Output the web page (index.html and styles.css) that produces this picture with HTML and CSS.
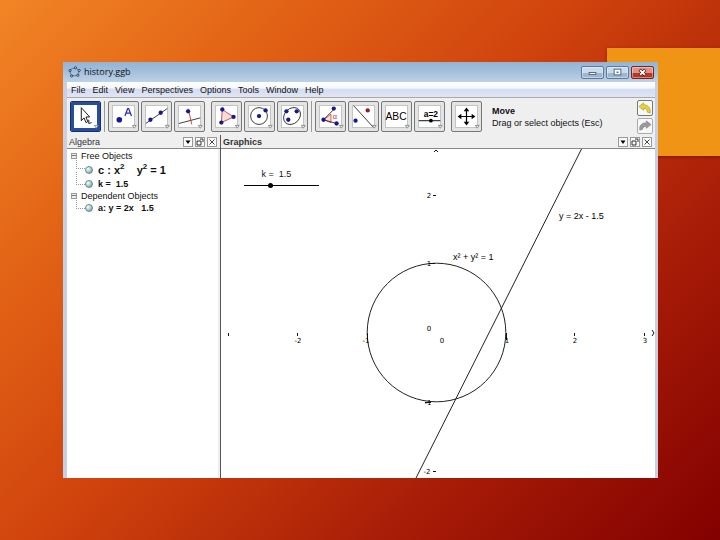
FILE: index.html
```
<!DOCTYPE html>
<html lang="en">
<head>
<meta charset="utf-8">
<title>history.ggb</title>
<link rel="stylesheet" href="styles.css">
</head>
<body>
<div class="accent"></div>
<main class="window">
  <header class="titlebar">
    <svg class="logo" viewBox="0 0 13 12" aria-hidden="true"><ellipse cx="6.5" cy="6" rx="4.3" ry="3.8" fill="none" stroke="#5b7194"/><g fill="#b9cbe6" stroke="#27395e" stroke-width=".9"><circle cx="7.5" cy="1.8" r="1.1"/><circle cx="11.2" cy="4.4" r="1.1"/><circle cx="9.8" cy="9.3" r="1.1"/><circle cx="3.6" cy="9.9" r="1.1"/><circle cx="2" cy="4.5" r="1.1"/></g></svg>
    <h1 class="title">history.ggb</h1>
    <div class="controls">
      <button class="control" aria-label="Minimize"><svg viewBox="0 0 22 11"><rect x="7.5" y="5.5" width="7" height="2" fill="#fff" stroke="#53657e"/></svg></button>
      <button class="control" aria-label="Maximize"><svg viewBox="0 0 22 11"><rect x="7.5" y="2" width="7" height="6" fill="#fff" stroke="#53657e"/><rect x="10" y="4.500" width="2" height="1.500" fill="#53657e"/></svg></button>
      <button class="control close" aria-label="Close"><svg viewBox="0 0 22 11"><path d="M8 2.500l6 6M14 2.500l-6 6" stroke="#5c2525" stroke-width="3.400"/><path d="M8.500 3l5 5M13.500 3l-5 5" stroke="#fff" stroke-width="1.800"/></svg></button>
    </div>
  </header>
  <nav class="menu">
    <button>File</button><button>Edit</button><button>View</button><button>Perspectives</button><button>Options</button><button>Tools</button><button>Window</button><button>Help</button>
  </nav>
  <section class="toolbar">
    <div class="group">
      <button class="tool selected" aria-label="Move"><svg viewBox="0 0 31 31"><path d="M11 6v14l3-3 2 5 2-1-2-5h4z" fill="#fff" stroke="#111"/><path d="M19 19v4l3-1" fill="none" stroke="#111"/><path class="more" d="M25 25h4l-2 3z"/></svg></button>
    </div>
    <div class="group ruled">
      <button class="tool" aria-label="New Point"><svg viewBox="0 0 31 31"><circle class="pt" cx="11" cy="19" r="3"/><path d="M17 15l3-8h1l3 8M18 12h5" fill="none" stroke="#2424c4" stroke-width="1.300"/><path class="more" d="M25 25h4l-2 3z"/></svg></button>
      <button class="tool" aria-label="Line"><svg viewBox="0 0 31 31"><path d="M4 23L27 7" stroke="#333"/><circle class="pt" cx="9" cy="19" r="2.300"/><circle class="pt" cx="20" cy="11.500" r="2.300"/><path class="more" d="M25 25h4l-2 3z"/></svg></button>
      <button class="tool" aria-label="Perpendicular Line"><svg viewBox="0 0 31 31"><path d="M4 23l23-6" stroke="#333"/><path d="M14 7l4 17" stroke="#d33a30"/><circle class="pt" cx="14" cy="10" r="2.300"/><path class="more" d="M25 25h4l-2 3z"/></svg></button>
    </div>
    <div class="group">
      <button class="tool" aria-label="Polygon"><svg viewBox="0 0 31 31"><path d="M11 8l12 8-13 6z" fill="#f8dcda" stroke="#bd4b48"/><circle class="pt" cx="11" cy="8" r="2.300"/><circle class="pt" cx="23" cy="16" r="2.300"/><circle class="pt" cx="10" cy="22" r="2.300"/><path class="more" d="M25 25h4l-2 3z"/></svg></button>
      <button class="tool" aria-label="Circle"><svg viewBox="0 0 31 31"><circle cx="15" cy="15" r="9" fill="none" stroke="#333"/><circle class="pt" cx="15" cy="15" r="2.300"/><circle class="pt" cx="22" cy="9" r="2.300"/><path class="more" d="M25 25h4l-2 3z"/></svg></button>
      <button class="tool" aria-label="Conic"><svg viewBox="0 0 31 31"><ellipse cx="15" cy="15" rx="10" ry="8" fill="none" stroke="#333" transform="rotate(-45 15 15)"/><circle class="pt" cx="9" cy="10" r="2.300"/><circle class="pt" cx="20" cy="10" r="2.300"/><circle class="pt" cx="11" cy="19" r="2.300"/><path class="more" d="M25 25h4l-2 3z"/></svg></button>
    </div>
    <div class="group ruled">
      <button class="tool" aria-label="Angle"><svg viewBox="0 0 31 31"><path d="M8 19l8-6v9z" fill="#f8dcda" stroke="#cf5550"/><path d="M19 8L8 19l14 4" fill="none" stroke="#333"/><circle class="pt" cx="19" cy="7" r="2.300"/><circle class="pt" cx="8" cy="19" r="2.300"/><circle class="pt" cx="22" cy="23" r="2.300"/><text x="18" y="18" font-size="8" fill="#cc3833">α</text><path class="more" d="M25 25h4l-2 3z"/></svg></button>
      <button class="tool" aria-label="Reflect"><svg viewBox="0 0 31 31"><path d="M5 4l21 23" stroke="#333"/><circle class="pt" cx="7" cy="20" r="2.300"/><circle cx="20" cy="9" r="2.300" fill="#8e2026"/><path class="more" d="M25 25h4l-2 3z"/></svg></button>
      <button class="tool" aria-label="Insert Text"><svg viewBox="0 0 31 31"><text x="15" y="19" font-size="11" text-anchor="middle">ABC</text><path class="more" d="M25 25h4l-2 3z"/></svg></button>
      <button class="tool" aria-label="Slider"><svg viewBox="0 0 31 31"><text x="17" y="16" font-size="9" font-weight="bold" text-anchor="middle">a=2</text><path d="M4 20h23" stroke="#000"/><circle cx="17" cy="20" r="2"/><path class="more" d="M25 25h4l-2 3z"/></svg></button>
    </div>
    <div class="group">
      <button class="tool" aria-label="Move Graphics View"><svg viewBox="0 0 31 31"><path d="M8 15.500h15M15.500 8v15" stroke="#000" stroke-width="1.300"/><path d="M15.500 6l3 4h-6zM15.500 25l3-4h-6zM6 15.500l4-3v6zM25 15.500l-4-3v6z"/><path class="more" d="M25 25h4l-2 3z"/></svg></button>
    </div>
    <div class="help"><strong>Move</strong><span>Drag or select objects (Esc)</span></div>
    <div class="history">
      <button aria-label="Undo"><svg viewBox="0 0 15 15"><path d="M1 6l5-4v2c5 0 8 4 7 9l-3-1c0-3-1-4-4-4v2z" fill="#e8d22c" stroke="#a79835" stroke-width=".7"/></svg></button>
      <button aria-label="Redo" disabled><svg viewBox="0 0 15 15"><path d="M14 6L9 2v2C4 4 1 7 2 12l3-1c0-2 1-3 4-3v2z" fill="#999" stroke="#888" stroke-width=".7"/></svg></button>
    </div>
  </section>
  <div class="panes">
    <section class="pane algebra">
      <header class="panehead"><h2>Algebra</h2>
        <button aria-label="Algebra menu"><svg viewBox="0 0 8 8"><path d="M1.500 2.500h5L4 6z"/></svg></button><button aria-label="Detach Algebra"><svg viewBox="0 0 8 8"><path d="M1 3h4v4H1zM4 1h3v3" fill="none" stroke="#333"/></svg></button><button aria-label="Close Algebra"><svg viewBox="0 0 8 8"><path d="M1.500 1.500l5 5M6.500 1.500l-5 5" stroke="#444"/></svg></button>
      </header>
      <ul class="tree">
        <li><div class="branch"><span class="toggle"></span>Free Objects</div>
          <ul class="leaves"><li class="formula"><i class="ball"></i><span>c : x<sup>2</sup>    y<sup>2</sup> = 1</span></li><li><i class="ball"></i><span>k =  1.5</span></li></ul></li>
        <li><div class="branch"><span class="toggle"></span>Dependent Objects</div>
          <ul class="leaves"><li><i class="ball"></i><span>a: y = 2x   1.5</span></li></ul></li>
      </ul>
    </section>
    <section class="pane graphics">
      <header class="panehead"><h2><b>Graphics</b></h2>
        <button aria-label="Graphics menu"><svg viewBox="0 0 8 8"><path d="M1.500 2.500h5L4 6z"/></svg></button><button aria-label="Detach Graphics"><svg viewBox="0 0 8 8"><path d="M1 3h4v4H1zM4 1h3v3" fill="none" stroke="#333"/></svg></button><button aria-label="Close Graphics"><svg viewBox="0 0 8 8"><path d="M1.500 1.500l5 5M6.500 1.500l-5 5" stroke="#444"/></svg></button>
      </header>
      <div class="canvas">
        <svg class="plot" viewBox="0 0 434 329" role="img" aria-label="Unit circle and a straight line">
          <g fill="none" stroke="#222"><circle cx="215.500" cy="183.500" r="69.300"/><path d="M360.500 0L195 329"/></g>
          <path d="M7.500 184v3M76.500 184v3M146.500 184v7M285.500 184v7M353.500 184v3M423.500 184v3M212 46.500h3M208 114.500h6M204 253.500h6M212 322.500h3M213 3l2-2 2 2M431 181l2 3-2 3" fill="none" stroke="#111"/>
          <g class="ticks"><text x="77" y="194">-2</text><text x="145" y="194">-1</text><text x="221" y="194">0</text><text x="286" y="194">1</text><text x="354" y="194">2</text><text x="424" y="194">3</text><text x="208" y="49">2</text><text x="208" y="117">1</text><text x="208" y="182">0</text><text x="207" y="256">-1</text><text x="206" y="325">-2</text></g>
          <g class="names"><text x="232" y="111">x² + y² = 1</text><text x="338" y="70">y = 2x - 1.5</text></g>
        </svg>
        <div class="slider"><label for="k">k =  1.5</label><input id="k" type="range" min="-5" max="5" step=".1" value="-1.6"></div>
      </div>
    </section>
  </div>
</main>
</body>
</html>
```
FILE: styles.css
```
* { box-sizing: border-box; }
body {
  margin: 0; min-height: 100vh; padding: 62px 62px 62px 63px;
  display: flex; flex-direction: column;
  background: linear-gradient(135deg, #f28526 0%, #e26416 22%, #d0430d 46%, #a81d07 73%, #820000 100%);
  font: 9px/12px "Liberation Sans", Arial, sans-serif; color: #111;
}
button { font: inherit; color: inherit; margin: 0; padding: 0; border: 0; background: none; }
svg { display: block; }
h1, h2, ul { margin: 0; padding: 0; font: inherit; list-style: none; }
.accent { position: absolute; top: 48px; right: 0; width: 113px; height: 108px; background: #f09415; box-shadow: 0 1px 3px #5008; }
.window { position: relative; flex: 1; display: flex; flex-direction: column; padding: 0 3px 0 4px; background: #c5d0e2; }
.titlebar { display: flex; align-items: center; height: 20px; margin: 0 -3px 0 -4px; padding: 0 4px 0 5px; background: linear-gradient(#94b3d3, #a1bddb 40%, #bdd1e8); }
.logo { width: 13px; height: 12px; margin-right: 3px; }
.title { flex: 1; font: 9px/12px "Open Sans", sans-serif; }
.controls { display: flex; gap: 2px; }
.control { width: 23px; height: 13px; border: 1px solid #5d7898; border-radius: 2px; background: linear-gradient(#c9daec 50%, #9db7d3 50%); box-shadow: inset 0 0 0 1px #fff6; }
.control svg { width: 100%; height: 11px; }
.close { border-color: #712722; background: linear-gradient(#dc9287 50%, #b93723 50%); }
.menu { display: flex; gap: 7px; height: 16px; padding: 0 4px; background: linear-gradient(#fff, #f3f6fc 40%, #d6ddf0 50%, #dfe5f5); border-bottom: 1px solid #aaa; }
.toolbar { display: flex; gap: 6px; align-items: center; height: 37px; padding: 0 2px 0 3px; background: #efefef; }
.group { display: flex; gap: 2px; }
.ruled { border-left: 1px solid #999; padding-left: 3px; margin-left: -3px; }
.tool { width: 31px; height: 31px; border: 1px solid #777; border-radius: 2px; background: #fff; box-shadow: inset 0 0 0 3px #e4e4e4, inset 0 0 0 4px #c4c4c4; }
.tool svg { width: 29px; height: 29px; }
.selected { border-color: #15306f; box-shadow: inset 0 0 0 3px #294d9d; }
.pt { fill: #171791; }
.more { fill: #fff; stroke: #888; }
.help { flex: 1; display: flex; flex-direction: column; padding-left: 4px; }
.history { display: flex; flex-direction: column; gap: 2px; }
.history button { width: 16px; height: 16px; border: 1px solid #777; border-radius: 2px; background: #f8f8f8; }
.history button:disabled { border-color: #aaa; }
.panes { flex: 1; display: grid; grid-template-columns: 153px 1fr; background: #fff; }
.pane { display: flex; flex-direction: column; }
.algebra { border-right: 2px solid #eee; }
.graphics { border-left: 1px solid #555; }
.panehead { display: flex; gap: 2px; align-items: center; height: 14px; padding: 0 3px 0 2px; background: #efefef; border-bottom: 1px solid #888; color: #333; }
.algebra .panehead { margin-right: -2px; }
.panehead h2 { flex: 1; }
.panehead button { width: 10px; height: 10px; border: 1px solid #999; background: #fafafa; }
.panehead svg { width: 8px; height: 8px; }
.tree { padding: 1px 4px; }
.branch { display: flex; align-items: center; gap: 4px; height: 12px; }
.toggle { width: 6px; height: 6px; border: 1px solid #999; background: linear-gradient(#eee 1px, #777 1px 2px, #eee 2px); }
.leaves { margin-left: 5px; font-weight: bold; }
.leaves li { display: flex; align-items: center; height: 12px; white-space: pre; }
.leaves li::before { content: ""; width: 8px; height: 12px; border: dotted #999; border-width: 0 0 1px 1px; align-self: flex-start; margin-top: -6px; }
.leaves .formula { height: 16px; font-size: 11px; line-height: 16px; }
.formula sup { font-size: 8px; line-height: 1px; }
.ball { width: 8px; height: 8px; margin: 0 5px 0 0; border: 1px solid #668a91; border-radius: 50%; background: radial-gradient(circle at 30% 30%, #fff, #9bc3c9 60%, #447c85); }
.canvas { position: relative; flex: 1; }
.plot { position: absolute; inset: 0; width: 100%; height: 100%; }
.ticks { font: 7px "DejaVu Sans", sans-serif; text-anchor: middle; }
.names { font-size: 9px; }
.slider { position: absolute; left: 23px; top: 19px; width: 75px; display: flex; flex-direction: column; }
.slider label { text-align: center; margin-right: 10px; white-space: pre; }
.slider input { appearance: none; margin: 0; width: 100%; height: 10px; background: linear-gradient(#000, #000) center / 100% 1px no-repeat; }
.slider input::-webkit-slider-thumb { appearance: none; width: 5px; height: 5px; border-radius: 50%; background: #000; }
```
